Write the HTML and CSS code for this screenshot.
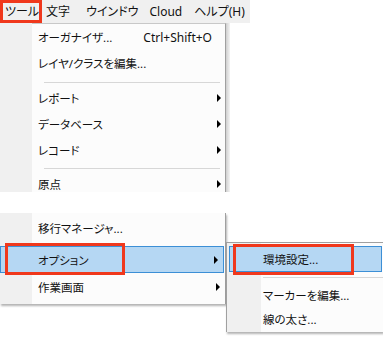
FILE: index.html
```html
<!DOCTYPE html>
<html lang="ja">
<head>
<meta charset="utf-8">
<title>ツール メニュー</title>
<link rel="stylesheet" href="styles.css">
</head>
<body>
<div class="screen">
  <div class="menubar">
    <span class="mb-item mb-tool">ツール</span>
    <span class="mb-item mb-moji">文字</span>
    <span class="mb-item mb-win">ウインドウ</span>
    <span class="mb-item mb-cloud">Cloud</span>
    <span class="mb-item mb-help">ヘルプ(H)</span>
  </div>

  <div class="pane pane-top">
    <div class="menu">
      <div class="item"><span class="label">オーガナイザ...</span><span class="accel">Ctrl+Shift+O</span></div>
      <div class="item"><span class="label">レイヤ/クラスを編集...</span></div>
      <div class="sep sep-a"></div>
      <div class="item"><span class="label">レポート</span><span class="arrow"></span></div>
      <div class="item"><span class="label">データベース</span><span class="arrow"></span></div>
      <div class="item"><span class="label">レコード</span><span class="arrow"></span></div>
      <div class="sep sep-b"></div>
      <div class="item"><span class="label">原点</span><span class="arrow"></span></div>
    </div>
    <div class="backdrop"></div>
  </div>

  <div class="gap"></div>

  <div class="pane-bottom">
    <div class="item item-first"><span class="label">移行マネージャ...</span></div>
    <div class="item item-hot"><span class="label">オプション</span><span class="arrow"></span></div>
    <div class="item item-last"><span class="label">作業画面</span><span class="arrow"></span></div>
  </div>

  <div class="submenu">
    <div class="sub-item sub-hot">環境設定...</div>
    <div class="sub-sep"></div>
    <div class="sub-item">マーカーを編集...</div>
    <div class="sub-item">線の太さ...</div>
  </div>

  <div class="callout callout-tool"></div>
  <div class="callout callout-option"></div>
  <div class="callout callout-pref"></div>
</div>
</body>
</html>
```

FILE: styles.css
```css
* { box-sizing: border-box; }

html, body {
  margin: 0;
  padding: 0;
  background: #ffffff;
}

.screen {
  position: relative;
  width: 383px;
  height: 337px;
  overflow: hidden;
  background: #ffffff;
  font-family: "Noto Sans", "Noto Sans CJK JP", sans-serif;
  font-size: 11.5px;
  color: #111111;
  font-feature-settings: "palt";
}

/* menubar */
.menubar {
  height: 23px;
  width: 250px;
  background: #f0f0f0;
  display: flex;
  align-items: center;
  padding-left: 5px;
  font-size: 12px;
}
.mb-item {
  line-height: 23px;
  white-space: nowrap;
}
.mb-tool { margin-right: 7px; }
.mb-moji { margin-right: 16px; }
.mb-win { margin-right: 11px; }
.mb-cloud { margin-right: 12px; }

/* top pane (cut-off part of the menu) */
.pane {
  display: flex;
}
.pane-top {
  height: 169px;
  overflow: hidden;
  background: linear-gradient(to right, #f0f0f0 32px, #ffffff 32px);
}
.menu {
  margin-left: 32px;
  width: 194px;
  background: #fcfcfc;
  border-top: 1px solid #c8c8c8;
  border-right: 1px solid #a0a0a0;
}
.backdrop {
  width: 4px;
  background: linear-gradient(to right, #cfcfcf, #f4f4f4);
}

.item {
  height: 26px;
  display: flex;
  align-items: center;
  padding-left: 6px;
  padding-right: 4px;
  white-space: nowrap;
}
.label { flex: 1; }
.accel {
  margin-right: 9px;
  font-size: 12px;
}
.arrow {
  width: 0;
  height: 0;
  border-left: 4px solid #000;
  border-top: 4px solid transparent;
  border-bottom: 4px solid transparent;
}

.sep {
  height: 9px;
  padding-top: 6px;
  padding-left: 12px;
  padding-right: 5px;
}
.sep::before {
  content: "";
  display: block;
  height: 1px;
  background: #d7d7d7;
}
.sep-b {
  height: 8px;
  padding-top: 5px;
}

.gap { height: 18px; }

/* bottom pane */
.pane-bottom {
  width: 226px;
  height: 91px;
  background: linear-gradient(to right, #f0f0f0 32px, #fcfcfc 32px);
  border-right: 1px solid #a0a0a0;
  box-shadow: 1px 2px 2px rgba(0, 0, 0, 0.3);
}
.pane-bottom .item { padding-left: 38px; padding-right: 5px; }
.pane-bottom .item-first {
  height: 30px;
  margin-top: 3px;
}
.pane-bottom .item-hot {
  height: 27px;
  margin-top: 3px;
  margin-right: 1px;
  padding-left: 37px;
  background: #b5d7f3;
  border: 1px solid #3c8fd6;
}
.pane-bottom .item-last {
  height: 27px;
}

/* submenu flyout */
.submenu {
  position: absolute;
  left: 226px;
  top: 242px;
  width: 157px;
  height: 90px;
  background: linear-gradient(to right, #f0f0f0 34px, #fcfcfc 34px);
  border-left: 1px solid #a0a0a0;
  border-top: 1px solid #a0a0a0;
  box-shadow: 1px 2px 2px rgba(0, 0, 0, 0.3);
  padding-top: 3px;
}
.sub-item {
  height: 24px;
  display: flex;
  align-items: center;
  padding-left: 36px;
  white-space: nowrap;
}
.sub-hot {
  height: 26px;
  margin-left: 2px;
  margin-right: 1px;
  padding-left: 33px;
  background: #b5d7f3;
  border: 1px solid #3c8fd6;
}
.sub-sep {
  height: 11px;
  padding-top: 5px;
  padding-left: 36px;
}
.sub-sep::before {
  content: "";
  display: block;
  height: 1px;
  background: #d7d7d7;
}

/* red callout rectangles */
.callout {
  position: absolute;
  border: 3px solid #f0381c;
}
.callout-tool { left: 0; top: 0; width: 42px; height: 23px; }
.callout-option { left: 5px; top: 243px; width: 120px; height: 32px; }
.callout-pref { left: 233px; top: 244px; width: 121px; height: 31px; }
```
